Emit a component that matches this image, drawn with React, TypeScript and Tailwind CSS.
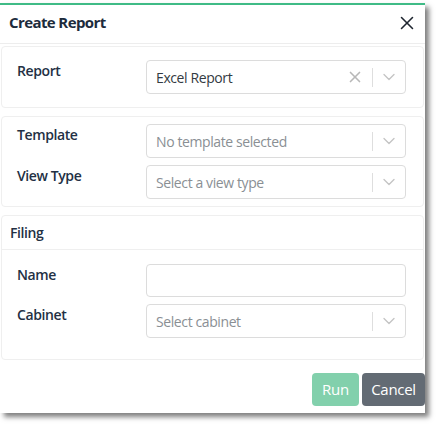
import { X, ChevronDown } from 'lucide-react'

const font = { fontFamily: '"Open Sans", "Noto Sans", sans-serif' }

function SelectBox({ value, placeholder, clearable }: { value?: string; placeholder?: string; clearable?: boolean }) {
  return (
    <div className="flex h-[34px] w-[260px] items-center rounded border border-[#dcdcdc] bg-white">
      <div className={`flex-1 pl-[9px] text-[14px] tracking-[-0.4px] ${value ? 'text-[#333a42]' : 'text-[#8a8f94]'}`}>
        {value ?? placeholder}
      </div>
      {clearable && <X className="mr-[8px] h-[18px] w-[18px] text-[#b8b8b8]" strokeWidth={2.2} />}
      <div className="h-[19px] w-px bg-[#dedede]" />
      <div className="flex w-[32px] justify-center">
        <ChevronDown className="h-[20px] w-[20px] text-[#c4c4c4]" strokeWidth={1.6} />
      </div>
    </div>
  )
}

function Row({ label, children }: { label: string; children: React.ReactNode }) {
  return (
    <div className="flex items-start pl-[15px]">
      <div className="w-[129px] pt-[1px] text-[14px] font-semibold leading-[20px] tracking-[-0.4px] text-[#233044]">{label}</div>
      {children}
    </div>
  )
}

export default function App() {
  return (
    <div className="h-[425px] w-[439px] bg-white pt-[3px]" style={font}>
      <div className="flex h-[410px] w-[425px] flex-col border-t-2 border-[#3fbb86] bg-white shadow-[4px_4px_5px_rgba(0,0,0,0.5)]">
        <div className="flex h-[39px] items-center justify-between border-b border-[#ededed] pb-[3px] pl-[9px] pr-[7px]">
          <div className="text-[15px] font-bold tracking-[-0.6px] text-[#1d2b3c]">Create Report</div>
          <X className="h-[22px] w-[22px] text-[#1f2630]" strokeWidth={1.7} />
        </div>

        <div className="mx-[1px] mt-[2px] rounded border border-[#efefef] py-[13px]">
          <Row label="Report">
            <SelectBox value="Excel Report" clearable />
          </Row>
        </div>

        <div className="mx-[1px] mt-[8px] flex flex-col gap-[7px] rounded border border-[#efefef] py-[7px]">
          <Row label="Template">
            <SelectBox placeholder="No template selected" />
          </Row>
          <Row label="View Type">
            <SelectBox placeholder="Select a view type" />
          </Row>
        </div>

        <div className="mx-[1px] mt-[8px] rounded border border-[#efefef]">
          <div className="flex h-[34px] items-center border-b border-[#efefef] pl-[8px] text-[14px] font-semibold tracking-[-0.4px] text-[#233044]">
            Filing
          </div>
          <div className="flex flex-col gap-[7px] pb-[21px] pt-[14px]">
            <Row label="Name">
              <div className="h-[33px] w-[260px] rounded border border-[#dcdcdc] bg-white" />
            </Row>
            <Row label="Cabinet">
              <SelectBox placeholder="Select cabinet" />
            </Row>
          </div>
        </div>

        <div className="mt-[13px] flex justify-end gap-[3px]">
          <button className="h-[33px] w-[47px] rounded bg-[#82d0ac] text-[15px] tracking-[-0.3px] text-white">Run</button>
          <button className="h-[33px] w-[63px] rounded bg-[#636b74] text-[15px] tracking-[-0.3px] text-white">Cancel</button>
        </div>
      </div>
    </div>
  )
}
